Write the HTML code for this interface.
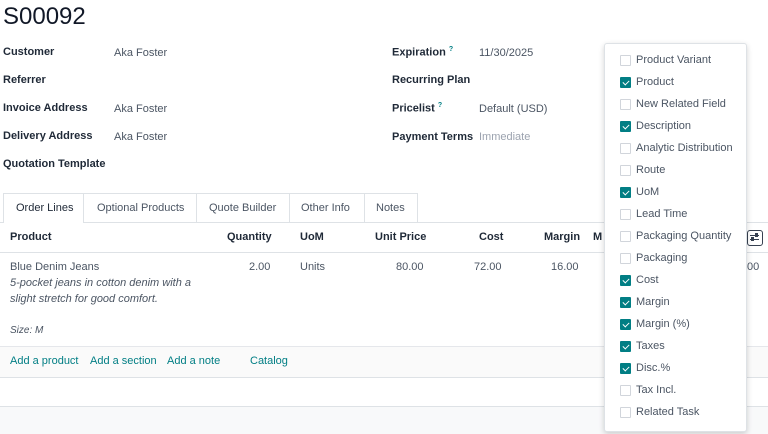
<!DOCTYPE html>
<html><head><meta charset="utf-8"><style>
*{box-sizing:border-box;margin:0;padding:0}
body{width:768px;height:434px;overflow:hidden;background:#fff;font-family:"Liberation Sans",sans-serif;font-size:11px;color:#374151;position:relative}
.a{position:absolute;white-space:nowrap}
.lb{font-weight:bold;color:#1f2937}
.v{color:#4b5563}
.h{font-weight:bold;color:#1f2937}
.lnk{color:#017e84}
.dd{position:absolute;left:604px;top:43px;width:143px;height:389px;background:#fff;border:1px solid #dee2e6;border-radius:3px;box-shadow:0 2px 6px rgba(0,0,0,.18)}
.it{position:absolute;left:15px;width:125px;height:12px;color:#4b5563;font-size:11px;white-space:nowrap}
.cb{position:absolute;left:0;top:0;width:11px;height:11px;border:1px solid #d1d5db;border-radius:1px;background:#fff}
.cb.on{background:#017e84;border-color:#017e84}
.cb.on::after{content:"";position:absolute;left:3px;top:1px;width:3px;height:5px;border:solid #fff;border-width:0 1.5px 1.5px 0;transform:rotate(45deg)}
.it span{position:absolute;left:16px;top:-1px}
</style></head><body>
<div class="a" style="left:3px;top:3px;font-size:24px;color:#111827">S00092</div>
<div class="a lb" style="left:3px;top:46px">Customer</div><div class="a v" style="left:114px;top:47px">Aka Foster</div>
<div class="a lb" style="left:3px;top:74px">Referrer</div>
<div class="a lb" style="left:3px;top:102px">Invoice Address</div><div class="a v" style="left:114px;top:103px">Aka Foster</div>
<div class="a lb" style="left:3px;top:130px">Delivery Address</div><div class="a v" style="left:114px;top:131px">Aka Foster</div>
<div class="a lb" style="left:3px;top:158px">Quotation Template</div>
<div class="a lb" style="left:392px;top:46px">Expiration <sup style="color:#017e84;font-size:7px">?</sup></div><div class="a v" style="left:479px;top:47px">11/30/2025</div>
<div class="a lb" style="left:392px;top:74px">Recurring Plan</div>
<div class="a lb" style="left:392px;top:102px">Pricelist <sup style="color:#017e84;font-size:7px">?</sup></div><div class="a v" style="left:479px;top:103px">Default (USD)</div>
<div class="a lb" style="left:392px;top:131px">Payment Terms</div><div class="a" style="left:479px;top:131px;color:#9ca3af">Immediate</div>
<!-- tabs -->
<div class="a" style="left:0;top:222px;width:768px;border-top:1px solid #dee2e6"></div>
<div class="a" style="left:3px;top:193px;width:81px;height:30px;border:1px solid #dee2e6;border-bottom:none;background:#fff"></div>
<div class="a" style="left:84px;top:193px;width:334px;height:29px;border:1px solid #dee2e6;border-left:none;border-bottom:none"></div>
<div class="a" style="left:196px;top:193px;height:29px;border-left:1px solid #dee2e6"></div>
<div class="a" style="left:289px;top:193px;height:29px;border-left:1px solid #dee2e6"></div>
<div class="a" style="left:364px;top:193px;height:29px;border-left:1px solid #dee2e6"></div>
<div class="a" style="left:16px;top:202px;color:#1f2937">Order Lines</div>
<div class="a v" style="left:97px;top:202px">Optional Products</div>
<div class="a v" style="left:209px;top:202px">Quote Builder</div>
<div class="a v" style="left:301px;top:202px">Other Info</div>
<div class="a v" style="left:376px;top:202px">Notes</div>
<!-- table -->
<div class="a h" style="left:10px;top:231px">Product</div>
<div class="a h" style="left:227px;top:231px">Quantity</div>
<div class="a h" style="left:300px;top:231px">UoM</div>
<div class="a h" style="left:375px;top:231px">Unit Price</div>
<div class="a h" style="left:479px;top:231px">Cost</div>
<div class="a h" style="left:544px;top:231px">Margin</div>
<div class="a h" style="left:593px;top:231px">M</div>
<div class="a" style="left:747px;top:230px;width:16px;height:16px;border:1.5px solid #374151;border-radius:3px"><div style="position:absolute;left:2px;top:4px;width:9px;border-top:1.5px solid #374151"></div><div style="position:absolute;left:2px;top:8px;width:9px;border-top:1.5px solid #374151"></div><div style="position:absolute;left:7px;top:2px;width:3px;height:4px;background:#374151"></div><div style="position:absolute;left:3px;top:6px;width:3px;height:4px;background:#374151"></div></div>
<div class="a" style="left:0;top:252px;width:768px;border-top:1px solid #dee2e6"></div>
<div class="a v" style="left:10px;top:261px">Blue Denim Jeans</div>
<div class="a v" style="left:10px;top:277px;font-style:italic">5-pocket jeans in cotton denim with a</div>
<div class="a v" style="left:10px;top:293px;font-style:italic">slight stretch for good comfort.</div>
<div class="a v" style="left:10px;top:325px;font-style:italic;font-size:10px">Size: M</div>
<div class="a v" style="left:249px;top:261px">2.00</div>
<div class="a v" style="left:300px;top:261px">Units</div>
<div class="a v" style="left:396px;top:261px">80.00</div>
<div class="a v" style="left:474px;top:261px">72.00</div>
<div class="a v" style="left:551px;top:261px">16.00</div>
<div class="a v" style="left:747px;top:261px">00</div>
<div class="a" style="left:0;top:346px;width:768px;height:32px;border-top:1px solid #e5e7eb;border-bottom:1px solid #dee2e6;background:#fafafa"></div>
<div class="a lnk" style="left:10px;top:355px">Add a product</div>
<div class="a lnk" style="left:90px;top:355px">Add a section</div>
<div class="a lnk" style="left:167px;top:355px">Add a note</div>
<div class="a lnk" style="left:250px;top:355px">Catalog</div>
<div class="a" style="left:0;top:406px;width:768px;height:28px;border-top:1px solid #dee2e6;background:#f8f9fa"></div>
<!-- dropdown -->
<div class="dd">
<div class="it" style="top:11px"><div class="cb"></div><span>Product Variant</span></div>
<div class="it" style="top:33px"><div class="cb on"></div><span>Product</span></div>
<div class="it" style="top:55px"><div class="cb"></div><span>New Related Field</span></div>
<div class="it" style="top:77px"><div class="cb on"></div><span>Description</span></div>
<div class="it" style="top:99px"><div class="cb"></div><span>Analytic Distribution</span></div>
<div class="it" style="top:121px"><div class="cb"></div><span>Route</span></div>
<div class="it" style="top:143px"><div class="cb on"></div><span>UoM</span></div>
<div class="it" style="top:165px"><div class="cb"></div><span>Lead Time</span></div>
<div class="it" style="top:187px"><div class="cb"></div><span>Packaging Quantity</span></div>
<div class="it" style="top:209px"><div class="cb"></div><span>Packaging</span></div>
<div class="it" style="top:231px"><div class="cb on"></div><span>Cost</span></div>
<div class="it" style="top:253px"><div class="cb on"></div><span>Margin</span></div>
<div class="it" style="top:275px"><div class="cb on"></div><span>Margin (%)</span></div>
<div class="it" style="top:297px"><div class="cb on"></div><span>Taxes</span></div>
<div class="it" style="top:319px"><div class="cb on"></div><span>Disc.%</span></div>
<div class="it" style="top:341px"><div class="cb"></div><span>Tax Incl.</span></div>
<div class="it" style="top:363px"><div class="cb"></div><span>Related Task</span></div>
</div>
</body></html>
